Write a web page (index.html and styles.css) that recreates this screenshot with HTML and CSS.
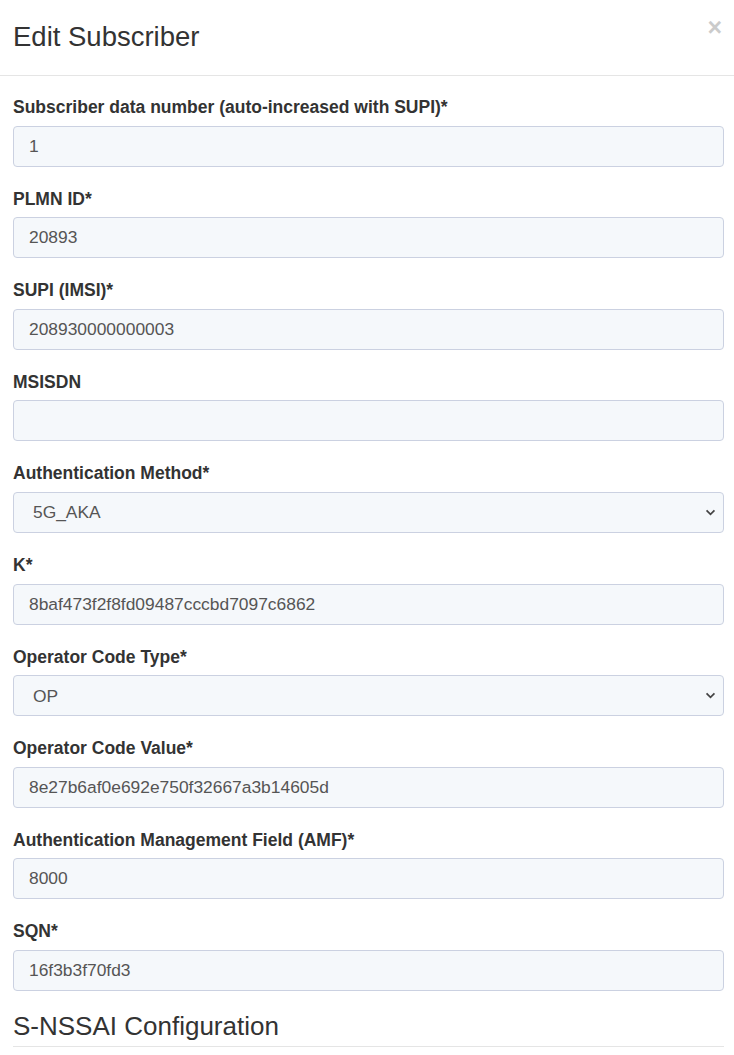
FILE: index.html
```html
<!DOCTYPE html>
<html>
<head>
<meta charset="utf-8">
<link rel="stylesheet" href="styles.css">
</head>
<body>
<div class="modal">
  <div class="modal-header">
    <h4 class="modal-title">Edit Subscriber</h4>
    <span class="close">×</span>
  </div>
  <div class="modal-body">
    <div class="form-group">
      <label class="control-label">Subscriber data number (auto-increased with SUPI)*</label>
      <input class="form-control" type="text" value="1">
    </div>
    <div class="form-group">
      <label class="control-label">PLMN ID*</label>
      <input class="form-control" type="text" value="20893">
    </div>
    <div class="form-group">
      <label class="control-label">SUPI (IMSI)*</label>
      <input class="form-control" type="text" value="208930000000003">
    </div>
    <div class="form-group">
      <label class="control-label">MSISDN</label>
      <input class="form-control" type="text" value="">
    </div>
    <div class="form-group">
      <label class="control-label">Authentication Method*</label>
      <select class="form-control select"><option>5G_AKA</option></select>
    </div>
    <div class="form-group">
      <label class="control-label">K*</label>
      <input class="form-control" type="text" value="8baf473f2f8fd09487cccbd7097c6862">
    </div>
    <div class="form-group">
      <label class="control-label">Operator Code Type*</label>
      <select class="form-control select"><option>OP</option></select>
    </div>
    <div class="form-group">
      <label class="control-label">Operator Code Value*</label>
      <input class="form-control" type="text" value="8e27b6af0e692e750f32667a3b14605d">
    </div>
    <div class="form-group">
      <label class="control-label">Authentication Management Field (AMF)*</label>
      <input class="form-control" type="text" value="8000">
    </div>
    <div class="form-group">
      <label class="control-label">SQN*</label>
      <input class="form-control" type="text" value="16f3b3f70fd3">
    </div>
    <h3 class="section-title">S-NSSAI Configuration</h3>
  </div>
</div>
</body>
</html>
```

FILE: styles.css
```css
html, body {
  margin: 0;
  padding: 0;
  background: #fff;
}
body {
  font-family: "Liberation Sans", Arial, Helvetica, sans-serif;
  color: #333;
  overflow: hidden;
}
.modal {
  width: 734px;
}
.modal-header {
  display: flex;
  justify-content: space-between;
  align-items: flex-start;
  padding: 18px 10px 19px 13px;
  border-bottom: 1px solid #e5e5e5;
}
.modal-title {
  margin: 0;
  font-size: 27.5px;
  font-weight: normal;
  line-height: 38px;
  color: #333;
}
.close {
  font-size: 25px;
  font-weight: bold;
  line-height: 20px;
  color: #000;
  opacity: 0.2;
  margin-top: -1px;
  margin-right: 2px;
}
.modal-body {
  padding: 19px 10px 0 13px;
}
.form-group {
  margin-bottom: 20px;
}
.control-label {
  display: block;
  font-size: 17.5px;
  font-weight: bold;
  line-height: 24.6px;
  margin-bottom: 6px;
  color: #333;
}
.form-control {
  display: block;
  box-sizing: border-box;
  width: 100%;
  height: 41px;
  margin: 0;
  padding: 0 15px;
  font-family: "Liberation Sans", Arial, Helvetica, sans-serif;
  font-size: 17.4px;
  color: #555;
  background-color: #f5f8fb;
  border: 1px solid #cbd1e1;
  border-radius: 4px;
  outline: none;
}
.select {
  padding: 0 30px 0 19px;
  appearance: none;
  -webkit-appearance: none;
  background-image: url("data:image/svg+xml;utf8,<svg xmlns='http://www.w3.org/2000/svg' width='12' height='8' viewBox='0 0 12 8'><path d='M1.5 1.5 L6 6 L10.5 1.5' fill='none' stroke='%23444' stroke-width='2'/></svg>");
  background-repeat: no-repeat;
  background-position: right 7px center;
  background-size: 11px 7px;
}
.section-title {
  margin: 4px 0 0 0;
  padding-bottom: 5px;
  font-size: 26px;
  font-weight: normal;
  line-height: 30px;
  color: #333;
  border-bottom: 1px solid #e5e5e5;
}
```
